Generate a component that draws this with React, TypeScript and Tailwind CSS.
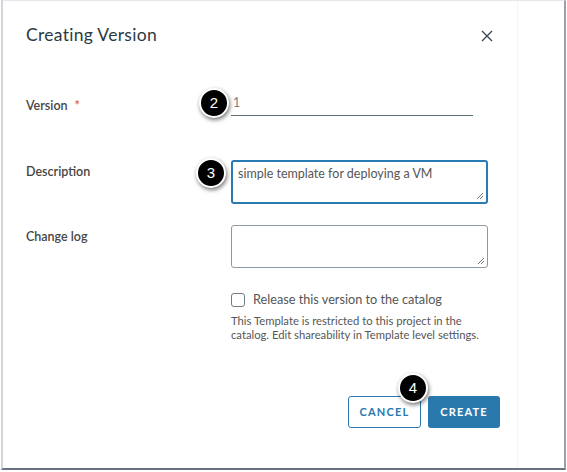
import React from "react";

function Badge({ n, x, y }: { n: string; x: number; y: number }) {
  return (
    <div
      className="absolute flex h-[30px] w-[30px] items-center justify-center rounded-full border-2 border-white bg-black text-[15px] text-white shadow-[1px_2px_4px_rgba(0,0,0,0.55)]"
      style={{ left: x - 15, top: y - 15, fontFamily: "Arial, 'Liberation Sans', sans-serif" }}
    >
      {n}
    </div>
  );
}

function Grip() {
  return (
    <svg width="8" height="8" viewBox="0 0 8 8" className="absolute bottom-[2px] right-[2px]">
      <path d="M7 1 L1 7 M7 4 L4 7" stroke="#555" strokeWidth="0.8" />
    </svg>
  );
}

export default function App() {
  return (
    <div
      className="relative h-[472px] w-[567px] overflow-hidden bg-white"
      style={{ fontFamily: "Lato, 'Open Sans', sans-serif" }}
    >
      <div className="ml-[1px] flex h-[470px] w-[565px] border-t border-l-2 border-r-2 border-b-2 border-t-gray-200 border-l-gray-300 border-r-gray-400 border-b-gray-500 bg-white">
        <div className="flex h-full w-[515px] flex-col border-r border-r-gray-100 pl-[23px] pr-[22px]">
          <div className="flex items-center justify-between pt-[22px]">
            <div className="text-[17.5px] leading-[24px] tracking-[0.3px] text-[#2b3a42]">Creating Version</div>
            <svg width="12" height="12" viewBox="0 0 12 12" className="mr-[2px] mt-[1px]">
              <path d="M1 1 L11 11 M11 1 L1 11" stroke="#3c4a52" strokeWidth="1.4" />
            </svg>
          </div>

          <div className="mt-[45px] flex">
            <div className="flex h-[24px] w-[205px] items-center pt-[4px] text-[12.5px] font-semibold text-[#454545]">
              Version<span className="ml-[7px] text-[#e0584b]">*</span>
            </div>
            <div className="flex h-[24px] w-[242px] items-center border-b border-[#5d7078] pl-[2px] text-[12.5px] text-[#808080]">
              1
            </div>
          </div>

          <div className="mt-[44px] flex">
            <div className="w-[205px] pt-[3px] text-[12.5px] font-semibold text-[#454545]">Description</div>
            <div className="relative h-[44px] w-[257px] rounded-[3px] border-2 border-[#2a7bb3] px-[5px] pt-[3px] text-[12.5px] text-[#565656]">
              simple template for deploying a VM
              <Grip />
            </div>
          </div>

          <div className="mt-[21px] flex">
            <div className="w-[205px] pt-[3px] text-[12.5px] font-semibold text-[#454545]">Change log</div>
            <div className="relative h-[43px] w-[257px] rounded-[3px] border border-[#8c9ba2]">
              <Grip />
            </div>
          </div>

          <div className="ml-[205px] mt-[22px] flex items-center">
            <div className="h-[14px] w-[14px] rounded-[3px] border border-[#6d7c84]" />
            <div className="ml-[8px] text-[12.7px] text-[#565656]">Release this version to the catalog</div>
          </div>
          <div className="ml-[205px] mt-[5px] text-[11.25px] leading-[14px] text-[#565656]">
            This Template is restricted to this project in the
            <br />
            catalog. Edit shareability in Template level settings.
          </div>

          <div className="-mr-[5px] mt-[54px] flex justify-end gap-[7px]">
            <div className="flex h-[32px] w-[73px] items-center justify-center rounded-[3px] border border-[#2a79ad] text-[11px] font-bold tracking-[1.2px] text-[#2a79ad]">
              CANCEL
            </div>
            <div className="flex h-[32px] w-[72px] items-center justify-center rounded-[3px] bg-[#2a79ad] text-[11px] font-bold tracking-[1.2px] text-white">
              CREATE
            </div>
          </div>
        </div>
      </div>

      <Badge n="2" x={214} y={103} />
      <Badge n="3" x={211} y={173} />
      <Badge n="4" x={413} y={388} />
    </div>
  );
}
